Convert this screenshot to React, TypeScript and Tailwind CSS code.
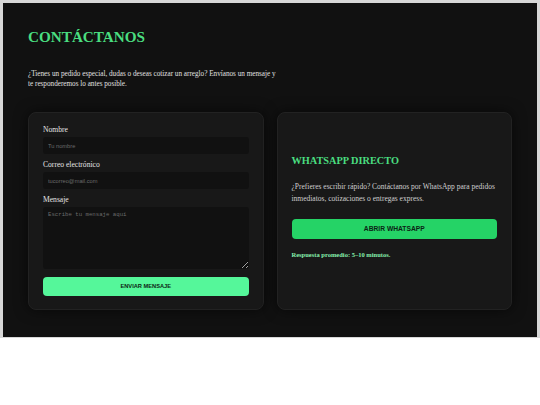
const serif = "font-['Liberation_Serif','Times_New_Roman',serif]";
const sans = "font-['Liberation_Sans',Arial,sans-serif]";

function Label({ children }: { children: string }) {
  return (
    <label className={`${serif} mb-[3px] text-[7.6px] leading-[8px] text-[#e5e5e5]`}>
      {children}
    </label>
  );
}

function Field({
  label,
  placeholder,
  type = "text",
}: {
  label: string;
  placeholder: string;
  type?: string;
}) {
  return (
    <div className="flex flex-col">
      <Label>{label}</Label>
      <input
        type={type}
        placeholder={placeholder}
        className={`${sans} h-[17px] rounded-[3px] bg-[#111111] px-[5px] text-[5.7px] text-[#ddd] placeholder:text-[#6b6b6b] outline-none`}
      />
    </div>
  );
}

export default function App() {
  return (
    <div className="bg-[#d8d8d8] px-[3px] pt-[3px] pb-[1px]">
      <section className="bg-[#111111] px-[25px] pt-[25px] pb-[27px]">
        <h1 className={`${serif} text-[15.2px] leading-[18px] font-bold text-[#4ade80]`}>
          CONTÁCTANOS
        </h1>
        <p className={`${serif} mt-[23px] w-[250px] text-[7.2px] leading-[10px] text-[#e0e0e0]`}>
          ¿Tienes un pedido especial, dudas o deseas cotizar un arreglo? Envíanos un mensaje y te
          responderemos lo antes posible.
        </p>

        <div className="mt-[23px] grid grid-cols-2 gap-[13px]">
          <form
            className="flex flex-col rounded-[8px] border border-[#222222] bg-[#181818] px-[14px] pt-[13px] pb-[13px] shadow-[0_0_14px_rgba(0,0,0,0.6)]"
            onSubmit={(e) => e.preventDefault()}
          >
            <div className="flex flex-col gap-[7px]">
              <Field label="Nombre" placeholder="Tu nombre" />
              <Field label="Correo electrónico" placeholder="tucorreo@mail.com" type="email" />
              <div className="flex flex-col">
                <Label>Mensaje</Label>
                <textarea
                  placeholder="Escribe tu mensaje aquí"
                  className="h-[62px] rounded-[3px] bg-[#111111] px-[5px] py-[4px] font-['Liberation_Mono',monospace] text-[5.7px] text-[#ddd] placeholder:text-[#6b6b6b] outline-none"
                />
              </div>
            </div>
            <button
              type="submit"
              className={`${sans} mt-[8px] h-[19px] rounded-[4px] bg-[#55f79a] text-[5.7px] font-bold text-[#0d1f14]`}
            >
              ENVIAR MENSAJE
            </button>
          </form>

          <div className="flex flex-col justify-center rounded-[8px] border border-[#222222] bg-[#181818] pl-[14px] pr-[14px] pb-[8px] shadow-[0_0_14px_rgba(0,0,0,0.6)]">
            <h2 className={`${serif} text-[10.3px] leading-[12px] font-bold text-[#4ade80]`}>
              WHATSAPP DIRECTO
            </h2>
            <p className={`${serif} mt-[14px] mr-[-6px] text-[7.5px] leading-[12px] text-[#cfcfcf]`}>
              ¿Prefieres escribir rápido? Contáctanos por WhatsApp para pedidos inmediatos,
              cotizaciones o entregas express.
            </p>
            <button
              className={`${sans} mt-[14px] h-[20px] rounded-[4px] bg-[#25d366] text-[6.7px] font-bold text-[#0b2415]`}
            >
              ABRIR WHATSAPP
            </button>
            <p className={`${serif} mt-[12px] text-[6.5px] leading-[8px] font-bold text-[#86efac]`}>
              Respuesta promedio: 5–10 minutos.
            </p>
          </div>
        </div>
      </section>
    </div>
  );
}
